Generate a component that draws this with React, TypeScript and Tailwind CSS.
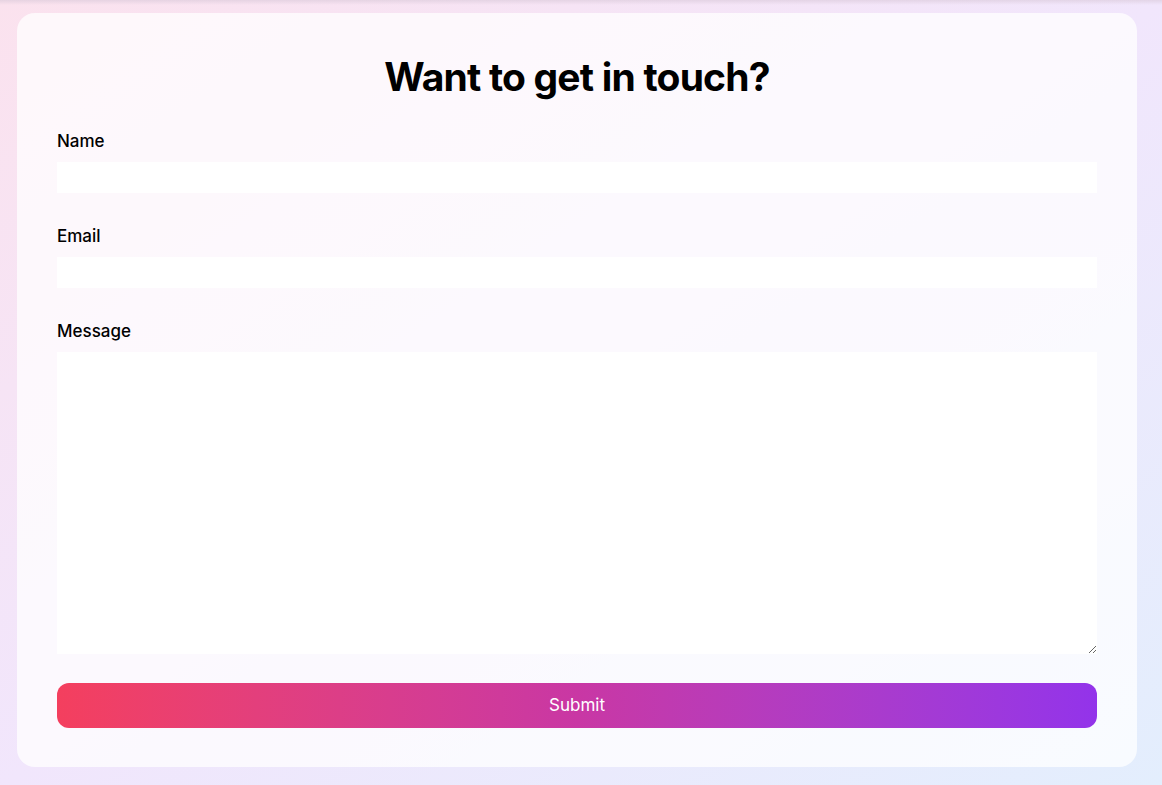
import React from "react";

export default function App() {
  return (
    <div
      className="relative min-h-[785px] w-full overflow-hidden bg-gradient-to-br from-[#fbe2ee] via-[#f1e6fc] to-[#e3eefd]"
      style={{ fontFamily: "Inter, 'Noto Sans', sans-serif" }}
    >
      <div className="pointer-events-none absolute inset-x-0 top-0 h-[5px] bg-gradient-to-b from-[#d9c9d9]/60 to-transparent" />
      <div className="px-[17px] pt-[13px]">
        <div className="flex w-[1120px] flex-col rounded-[18px] bg-white/75 px-[40px] pb-[39px] pt-[40px]">
          <h1 className="text-center text-[39px] font-bold leading-[48px] tracking-[-0.8px] text-black">
            Want to get in touch?
          </h1>
          <form className="mt-[30px] flex flex-col" onSubmit={(e) => e.preventDefault()}>
            <label className="block text-[17px] font-medium leading-[20px] text-black">Name</label>
            <input type="text" className="mt-[11px] block h-[31px] w-full bg-white outline-none" />
            <label className="mt-[33px] block text-[17px] font-medium leading-[20px] text-black">Email</label>
            <input type="email" className="mt-[11px] block h-[31px] w-full bg-white outline-none" />
            <label className="mt-[33px] block text-[17px] font-medium leading-[20px] text-black">Message</label>
            <textarea className="mt-[11px] block h-[302px] w-full resize-y bg-white outline-none" />
            <button
              type="submit"
              className="mt-[29px] h-[45px] w-full rounded-[12px] bg-gradient-to-r from-[#f43f5e] via-[#c937a4] to-[#9333ea] text-[17px] text-white"
            >
              Submit
            </button>
          </form>
        </div>
      </div>
    </div>
  );
}
